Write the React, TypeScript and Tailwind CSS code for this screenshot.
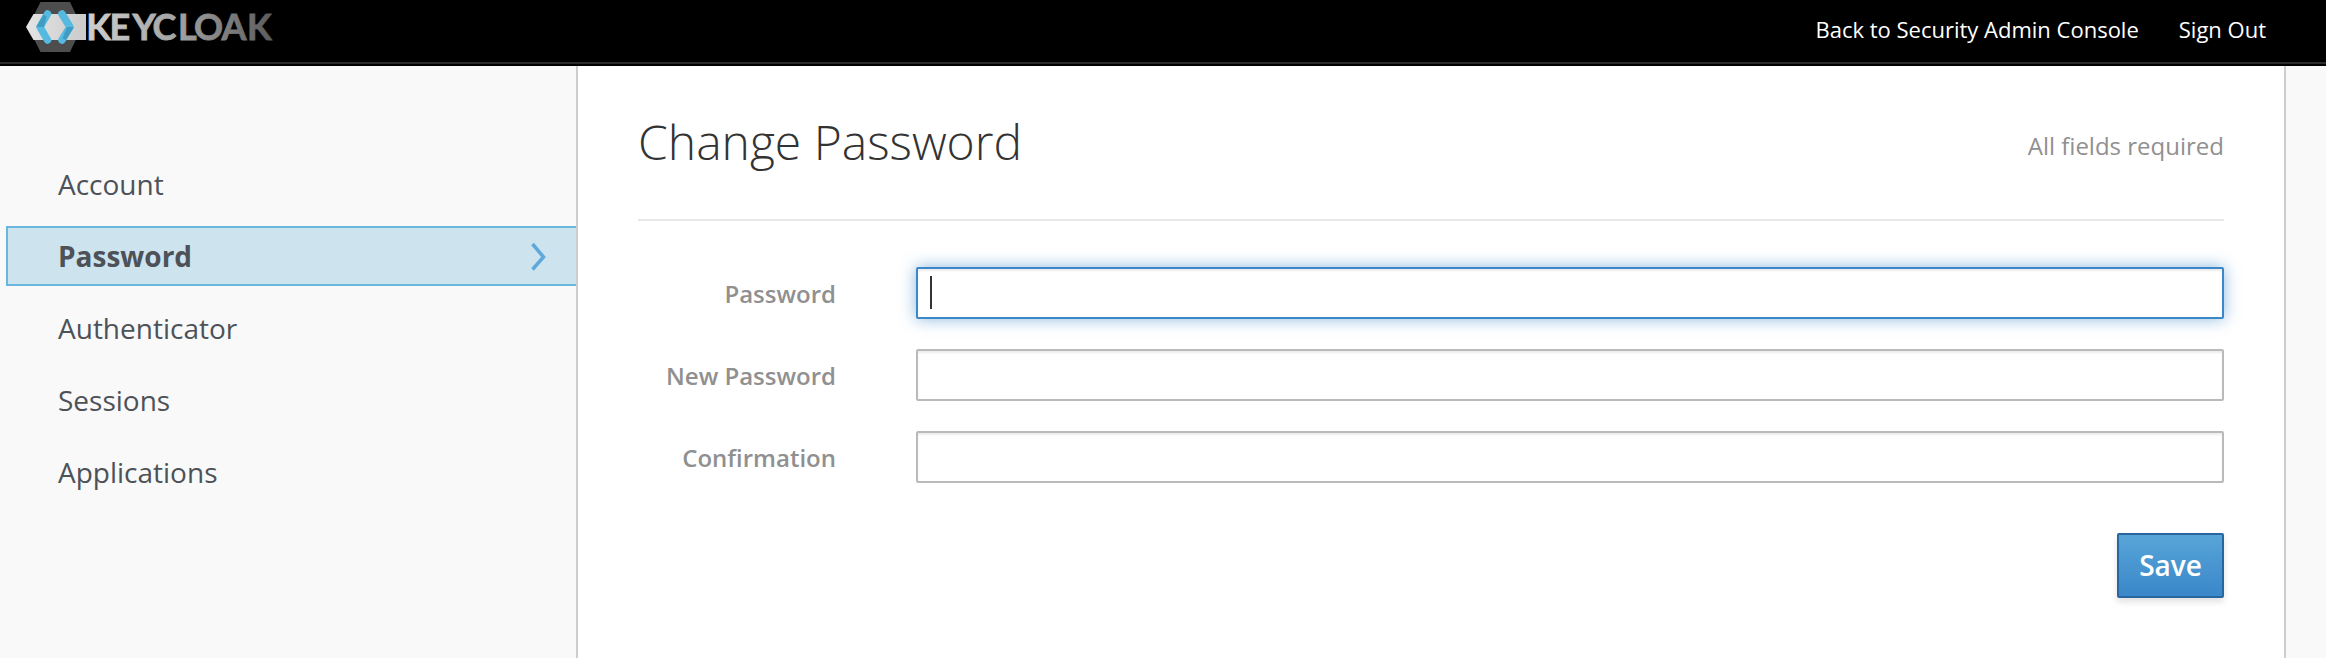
import React from "react";

function Logo() {
  return (
    <svg width="250" height="54" viewBox="0 0 250 54" className="ml-[25px] block">
      <defs>
        <linearGradient id="word" x1="60" x2="247" y1="0" y2="0" gradientUnits="userSpaceOnUse">
          <stop offset="0" stopColor="#d0d0d0" />
          <stop offset="0.5" stopColor="#a2a2a2" />
          <stop offset="1" stopColor="#5c5c5c" />
        </linearGradient>
        <linearGradient id="band" x1="0" x2="1" y1="0" y2="0">
          <stop offset="0" stopColor="#e4e4e4" />
          <stop offset="1" stopColor="#cbcbcb" />
        </linearGradient>
      </defs>
      <path d="M15.500 2H45L57 27L45 52H15.500L3 27Z" fill="#4d4d4d" />
      <path d="M8.500 14H61V40H8.500L1 27Z" fill="url(#band)" />
      <g fill="none" strokeWidth="7.500" strokeLinecap="round" strokeLinejoin="round">
        <path d="M22.500 14L15 27L22.500 40" stroke="#56b9e0" />
        <path d="M37 14L45 27L37 40" stroke="#56b9e0" />
      </g>
      <path d="M11.200 27L18.500 14.500L21.500 16.500L19 27Z" fill="#3f9dc4" />
      <path d="M48.800 27L41 40L37.500 38.500L42 27Z" fill="#3f9dc4" />
      <text x="61.200 84.500 107.500 127.500 153 169 196.500 222" y="40" fontFamily="Lato" fontWeight="700" fontSize="36" fill="url(#word)" stroke="url(#word)" strokeWidth="0.800">KEYCLOAK</text>
    </svg>
  );
}

const items = ["Account", "Password", "Authenticator", "Sessions", "Applications"];

function Sidebar() {
  return (
    <nav className="flex w-[578px] shrink-0 flex-col gap-3 border-r-2 border-[#cdcdcd] pt-[88px] pl-[6px] text-[28px] text-[#4d5258]">
      {items.map((name) =>
        name === "Password" ? (
          <a key={name} className="flex h-[60px] items-center justify-between border-2 border-r-0 border-[#6bb6dc] bg-[#cde3ee] pr-[28px] pl-[50px] font-bold">
            <span>{name}</span>
            <svg width="20" height="30" viewBox="0 0 20 30" fill="none" stroke="#5ea9dc" strokeWidth="3.500">
              <path d="M4.500 3L15.500 16L4.500 28.500" />
            </svg>
          </a>
        ) : (
          <a key={name} className="flex h-[60px] items-center pl-[52px]">{name}</a>
        )
      )}
    </nav>
  );
}

function Field({ label, focused = false }: { label: string; focused?: boolean }) {
  return (
    <div className="flex h-[52px] items-center">
      <label className="w-[198px] shrink-0 pt-[2px] text-right text-[24px] leading-8 font-semibold text-[#909090]">{label}</label>
      {focused ? (
        <div className="ml-[80px] h-[52px] flex-1 rounded-[2px] border-2 border-[#3b87c8] bg-white pt-[7px] pl-3 shadow-[inset_0_2px_2px_rgba(0,0,0,0.075),0_0_16px_rgba(59,135,200,0.6)]">
          <div className="h-[33px] w-[2px] bg-[#333]" />
        </div>
      ) : (
        <div className="ml-[80px] h-[52px] flex-1 rounded-[2px] border-2 border-[#bababa] bg-white shadow-[inset_0_2px_2px_rgba(0,0,0,0.075)]" />
      )}
    </div>
  );
}

export default function App() {
  return (
    <div className="flex h-[658px] w-[2326px] flex-col overflow-hidden bg-[#f9f9f9] font-['Open_Sans',sans-serif]">
      <header className="flex h-[66px] shrink-0 flex-col bg-black">
        <div className="flex h-[62px] justify-between">
          <Logo />
          <div className="flex h-[58px] items-center gap-10 pr-[60px] text-[22px] text-white">
            <a>Back to Security Admin Console</a>
            <a>Sign Out</a>
          </div>
        </div>
        <div className="h-[2px] bg-[#2b2b2b]" />
      </header>
      <div className="flex flex-1">
        <Sidebar />
        <main className="flex w-[1708px] flex-col border-r-2 border-[#cdcdcd] bg-white pr-[60px] pl-[60px]">
          <div className="flex h-[155px] shrink-0 items-center justify-between border-b-2 border-[#e8e8e8]">
            <h1 className="pb-[2px] text-[48px] font-light text-[#333]">Change Password</h1>
            <span className="pt-[7px] text-[24px] text-[#909090]">All fields required</span>
          </div>
          <form className="flex flex-col gap-[30px] pt-[46px]">
            <Field label="Password" focused />
            <Field label="New Password" />
            <Field label="Confirmation" />
          </form>
          <button type="button" className="mt-[50px] h-[65px] w-[107px] self-end rounded-[2px] border-2 border-[#27669e] bg-linear-to-b from-[#57a5d8] to-[#3a87c9] pb-[2px] text-[28px] leading-none font-semibold text-white shadow-[0_4px_6px_rgba(0,0,0,0.12)]">
            Save
          </button>
        </main>
      </div>
    </div>
  );
}
